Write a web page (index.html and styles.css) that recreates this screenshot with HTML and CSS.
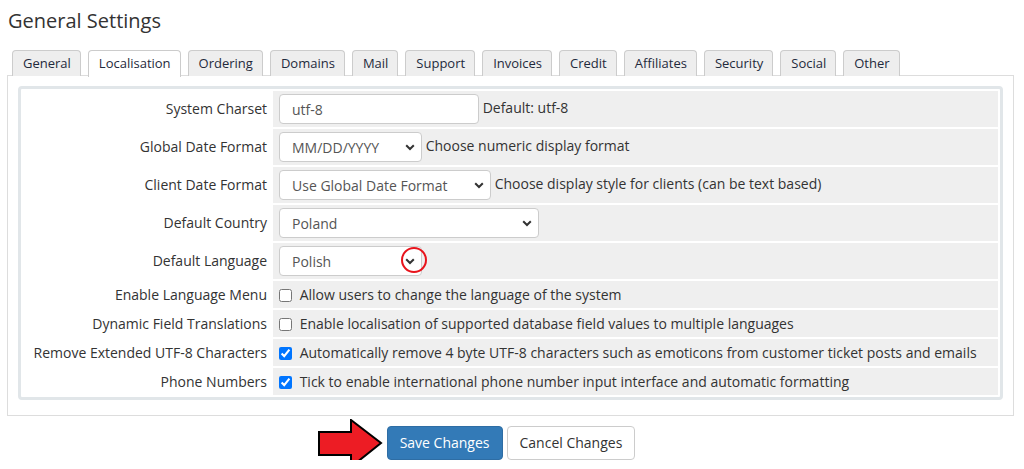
FILE: index.html
```html
<!DOCTYPE html>
<html lang="en">
<head>
  <meta charset="UTF-8" />
  <title>General Settings</title>
  <link rel="stylesheet" href="styles.css">
</head>
<body>
  <div class="page">
    <h1>General Settings</h1>

    <ul class="tabs">
      <li>General</li>
      <li class="active">Localisation</li>
      <li>Ordering</li>
      <li>Domains</li>
      <li>Mail</li>
      <li>Support</li>
      <li>Invoices</li>
      <li>Credit</li>
      <li>Affiliates</li>
      <li>Security</li>
      <li>Social</li>
      <li>Other</li>
    </ul>

    <div class="tab-panel">
      <table class="form">
        <tr>
          <td class="label">System Charset</td>
          <td class="field"><input type="text" class="input w200" value="utf-8"> Default: utf-8</td>
        </tr>
        <tr>
          <td class="label">Global Date Format</td>
          <td class="field">
            <select class="input w143"><option>MM/DD/YYYY</option></select> Choose numeric display format
          </td>
        </tr>
        <tr>
          <td class="label">Client Date Format</td>
          <td class="field">
            <select class="input w212"><option>Use Global Date Format</option></select> Choose display style for clients (can be text based)
          </td>
        </tr>
        <tr>
          <td class="label">Default Country</td>
          <td class="field">
            <select class="input w260"><option>Poland</option></select>
          </td>
        </tr>
        <tr>
          <td class="label">Default Language</td>
          <td class="field">
            <span class="marked">
              <select class="input w143"><option>Polish</option></select>
              <span class="ring"></span>
            </span>
          </td>
        </tr>
        <tr class="check-row">
          <td class="label">Enable Language Menu</td>
          <td class="field"><label><input type="checkbox"> Allow users to change the language of the system</label></td>
        </tr>
        <tr class="check-row">
          <td class="label">Dynamic Field Translations</td>
          <td class="field"><label><input type="checkbox"> Enable localisation of supported database field values to multiple languages</label></td>
        </tr>
        <tr class="check-row">
          <td class="label">Remove Extended UTF-8 Characters</td>
          <td class="field"><label><input type="checkbox" checked> Automatically remove 4 byte UTF-8 characters such as emoticons from customer ticket posts and emails</label></td>
        </tr>
        <tr class="check-row">
          <td class="label">Phone Numbers</td>
          <td class="field"><label><input type="checkbox" checked> Tick to enable international phone number input interface and automatic formatting</label></td>
        </tr>
      </table>
    </div>

    <div class="btn-container">
      <div class="actions">
        <svg class="arrow" width="66" height="50" viewBox="0 0 66 50">
          <polygon points="1,13 33,13 33,1 63,24 33,48 33,36 1,36" fill="#ed1c24" stroke="#000" stroke-width="2" stroke-linejoin="miter"/>
        </svg>
        <button class="btn btn-primary">Save Changes</button>
        <button class="btn btn-default">Cancel Changes</button>
      </div>
    </div>
  </div>
</body>
</html>
```

FILE: styles.css
```css
body {
  margin: 0;
  font-family: "Open Sans", "Liberation Sans", sans-serif;
  font-size: 14px;
  color: #333;
  background: #fff;
}
.page {
  padding: 0 10px 0 7px;
}
h1 {
  margin: 0;
  padding: 7px 0 0 1px;
  font-size: 20px;
  font-weight: normal;
  line-height: 27px;
  color: #333;
}
.tabs {
  display: flex;
  gap: 7px;
  list-style: none;
  margin: 16px 0 -1px;
  padding: 0 0 0 5px;
}
.tabs li {
  border: 1px solid #ccc;
  border-bottom: none;
  border-radius: 4px 4px 0 0;
  background: #eee;
  padding: 3px 9px 4px 10px;
  font-size: 13px;
  line-height: 18px;
  color: #1f2a3c;
}
.tabs li.active {
  background: #fff;
  position: relative;
  padding-bottom: 5px;
  margin-bottom: -1px;
}
.tab-panel {
  border: 1px solid #ddd;
  padding: 10px 10px 15px;
}
.form {
  width: 100%;
  border: 3px solid #e1e6e9;
  border-radius: 4px;
  border-spacing: 2px;
}
.form td {
  padding: 3px 6px;
  height: 30px;
  line-height: 20px;
}
.form .check-row td {
  height: 21px;
}
.label {
  width: 238px;
  text-align: right;
  padding-right: 4px !important;
}
.field {
  background: #efefef;
}
.input {
  height: 30px;
  box-sizing: border-box;
  border: 1px solid #ccc;
  border-radius: 4px;
  background: #fff;
  padding: 0 12px;
  font-family: inherit;
  font-size: 14px;
  color: #555;
  vertical-align: middle;
}
select.input {
  appearance: none;
  -webkit-appearance: none;
  padding-right: 24px;
  background: #fff url("data:image/svg+xml,%3Csvg xmlns='http://www.w3.org/2000/svg' width='10' height='7' viewBox='0 0 10 7'%3E%3Cpath d='M1.2 1.2 5 5 8.8 1.2' fill='none' stroke='%23333' stroke-width='2'/%3E%3C/svg%3E") no-repeat right 6px center;
}
.w200 { width: 200px; }
.w143 { width: 143px; }
.w212 { width: 212px; }
.w260 { width: 260px; }
.field input[type="checkbox"] {
  width: 13px;
  height: 13px;
  margin: 0 4px 0 0;
  vertical-align: -2px;
}
.marked {
  position: relative;
  display: inline-block;
}
.ring {
  position: absolute;
  right: -5px;
  top: 1px;
  width: 22px;
  height: 22px;
  border: 2px solid #e8141c;
  border-radius: 50%;
}
.btn-container {
  text-align: center;
  padding-top: 10px;
}
.actions {
  display: inline-flex;
  gap: 4px;
  position: relative;
  margin-left: 1px;
}
.arrow {
  position: absolute;
  right: calc(100% + 3px);
  top: -7px;
}
.btn {
  font-family: inherit;
  font-size: 14px;
  line-height: 20px;
  padding: 6px 12px;
  border-radius: 4px;
  border: 1px solid #ccc;
  cursor: pointer;
}
.btn-primary {
  background: #337ab7;
  border-color: #2e6da4;
  color: #fff;
}
.btn-default {
  background: #fff;
  color: #333;
}
```
